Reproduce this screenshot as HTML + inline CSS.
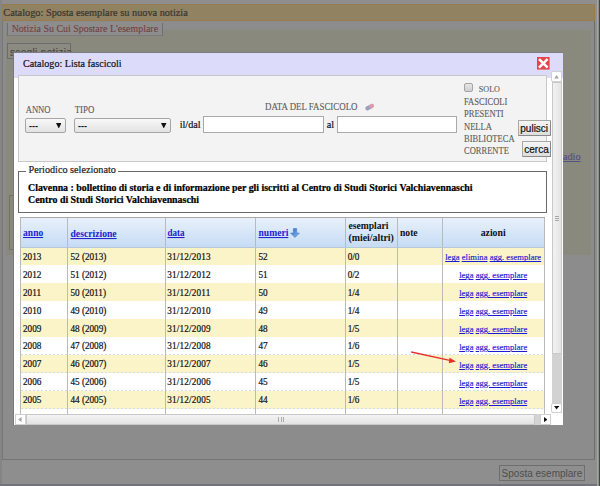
<!DOCTYPE html>
<html><head><meta charset="utf-8"><style>
html,body{margin:0;padding:0;width:600px;height:486px;overflow:hidden;background:#888}
#r>*{position:absolute;white-space:nowrap;box-sizing:border-box;-webkit-text-stroke:0.2px currentColor}
</style></head><body><div id="r" style="position:relative;width:600px;height:486px;overflow:hidden">
<div style="left:0px;top:0px;width:600px;height:486px;background:#8e8e8e"></div>
<div style="left:0px;top:0px;width:1.5px;height:486px;background:#858585"></div>
<div style="left:596.9px;top:0px;width:1.6px;height:486px;background:#a6a69e"></div>
<div style="left:598.5px;top:0px;width:1.5px;height:486px;background:#3e4a40"></div>
<div style="left:1.5px;top:4px;width:593.1px;height:17px;background:#918262;border:1px solid #9a7b4e;box-sizing:border-box"></div>
<div style="left:1.5px;top:21px;width:593px;height:1px;background:#767676"></div>
<div style="left:3.3px;top:8.15px;font-family:'Liberation Serif', serif;font-size:10.3px;line-height:10.3px;color:#3a3630;font-weight:normal;">Catalogo: Sposta esemplare su nuova notizia</div>
<div style="left:2px;top:21px;width:593px;height:438.5px;background:#8c8c8c;border-left:1px solid #777;border-right:1.2px solid #6e6e6e;border-bottom:1.5px solid #747474;box-sizing:border-box"></div>
<div style="left:5.5px;top:29.7px;width:585px;height:225px;background:#8a897d"></div>
<div style="left:7px;top:22.5px;width:156.3px;height:13.8px;background:#8d8d8d;border-left:1px solid #6f6f6f;border-right:1px solid #6f6f6f;border-bottom:1px solid #7a7a7a;box-sizing:border-box"></div>
<div style="left:11.7px;top:24.44px;font-family:'Liberation Serif', serif;font-size:9.95px;line-height:9.95px;color:#744040;font-weight:normal;-webkit-text-stroke:0.1px currentColor">Notizia Su Cui Spostare L&#39;esemplare</div>
<div style="left:7.2px;top:43.1px;width:63.8px;height:16px;background:#8c8b82;border:1px solid #6c6c6c;box-sizing:border-box"></div>
<div style="left:10px;top:47.50px;font-family:'Liberation Sans', sans-serif;font-size:10.0px;line-height:10.0px;color:#4a4842;font-weight:normal;letter-spacing:0.35px">scegli notizia</div>
<div style="left:8.6px;top:194.5px;width:10px;height:55px;border:1px solid #74736a"></div>
<div style="left:563px;top:151.83px;font-family:'Liberation Serif', serif;font-size:10.2px;line-height:10.2px;color:#52528a;font-weight:normal;text-decoration:underline">adio</div>
<div style="left:0px;top:484px;width:597px;height:2px;background:#72727c"></div>
<div style="left:499px;top:465px;width:86px;height:16.4px;background:#8f8f8f;border:1px solid #6e6e6e;box-sizing:border-box"></div>
<div style="left:501.6px;top:468.50px;font-family:'Liberation Sans', sans-serif;font-size:10.0px;line-height:10.0px;color:#4e4e4e;font-weight:normal;-webkit-text-stroke:0">Sposta esemplare</div>
<div style="left:14px;top:52.3px;width:549px;height:1px;background:#7c7c84"></div>
<div style="left:13.2px;top:52.5px;width:1px;height:372.5px;background:#787878"></div>
<div style="left:14px;top:53px;width:549px;height:372px;background:#ffffff"></div>
<div style="left:14px;top:53px;width:549px;height:25px;background:#dcdcfa"></div>
<div style="left:23px;top:58.62px;font-family:'Liberation Serif', serif;font-size:10.1px;line-height:10.1px;color:#111;font-weight:normal;transform:scaleY(1.05);transform-origin:0 8.38px;">Catalogo: Lista fascicoli</div>
<svg style="left:537px;top:57px;width:12.6px;height:12.6px" viewBox="0 0 13 13"><rect width="13" height="13" fill="#e8424a"/><path d="M3 3L10 10M10 3L3 10" stroke="#fff" stroke-width="2.6" stroke-linecap="square"/></svg>
<div style="left:18px;top:75px;width:529px;height:87px;background:#f3f3f3;border:1px solid #c8c8c8;box-sizing:border-box"></div>
<div style="left:25.7px;top:105.86px;font-family:'Liberation Serif', serif;font-size:8.6px;line-height:8.6px;color:#5c5c5c;font-weight:normal;transform:scaleY(1.12);transform-origin:0 7.14px;-webkit-text-stroke:0.1px currentColor">ANNO</div>
<div style="left:74.7px;top:105.70px;font-family:'Liberation Serif', serif;font-size:8.8px;line-height:8.8px;color:#5c5c5c;font-weight:normal;transform:scaleY(1.12);transform-origin:0 7.30px;-webkit-text-stroke:0.1px currentColor">TIPO</div>
<div style="left:25px;top:117.7px;width:40.7px;height:15px;background:linear-gradient(#f8f8f8,#e2e2e2);border:1px solid #a6a6a6;border-radius:2px;box-sizing:border-box"></div>
<div style="left:29px;top:121.85px;font-family:'Liberation Sans', sans-serif;font-size:9px;line-height:9px;color:#111;font-weight:bold;-webkit-text-stroke:0;">---</div>
<svg style="left:55.7px;top:122.5px;width:5.5px;height:5.5px" viewBox="0 0 7 7"><path d="M0 0H7L3.5 7Z" fill="#111"/></svg>
<div style="left:74px;top:117.7px;width:97.3px;height:15px;background:linear-gradient(#f8f8f8,#e2e2e2);border:1px solid #a6a6a6;border-radius:2px;box-sizing:border-box"></div>
<div style="left:78px;top:121.85px;font-family:'Liberation Sans', sans-serif;font-size:9px;line-height:9px;color:#111;font-weight:bold;-webkit-text-stroke:0;">---</div>
<svg style="left:161.3px;top:122.5px;width:5.5px;height:5.5px" viewBox="0 0 7 7"><path d="M0 0H7L3.5 7Z" fill="#111"/></svg>
<div style="left:179.7px;top:119.83px;font-family:'Liberation Serif', serif;font-size:10.2px;line-height:10.2px;color:#111;font-weight:normal;">il/dal</div>
<div style="left:202.7px;top:116px;width:121.3px;height:17.3px;background:#fff;border:1px solid #a9a9a9;box-sizing:border-box"></div>
<div style="left:326.7px;top:119.83px;font-family:'Liberation Serif', serif;font-size:10.2px;line-height:10.2px;color:#111;font-weight:normal;">al</div>
<div style="left:337px;top:116px;width:120.2px;height:17.4px;background:#fff;border:1px solid #a9a9a9;box-sizing:border-box"></div>
<div style="left:265px;top:102.61px;font-family:'Liberation Serif', serif;font-size:8.9px;line-height:8.9px;color:#5c5c5c;font-weight:normal;transform:scaleY(1.12);transform-origin:0 7.39px;-webkit-text-stroke:0.1px currentColor">DATA DEL FASCICOLO</div>
<svg style="left:363px;top:101px;width:12px;height:12px" viewBox="0 0 12 12"><g transform="translate(0.5 0.2) rotate(-28 6 6)"><rect x="1.5" y="4" width="9.2" height="4" rx="2" fill="#98a0c0"/><path d="M6 4H8.7A2 2 0 0 1 8.7 8H6Z" fill="#e29aa6"/></g></svg>
<div style="left:464px;top:83px;width:9.2px;height:9.2px;background:linear-gradient(#e6e6e6,#cfcfcf);border:1px solid #a4a4a4;border-radius:2px;box-sizing:border-box"></div>
<div style="left:478.8px;top:86.28px;font-family:'Liberation Serif', serif;font-size:8.1px;line-height:8.1px;color:#5c5c5c;font-weight:normal;transform:scaleY(1.12);transform-origin:0 6.72px;-webkit-text-stroke:0.1px currentColor">SOLO</div>
<div style="left:464px;top:97.94px;font-family:'Liberation Serif', serif;font-size:8.5px;line-height:8.5px;color:#5c5c5c;font-weight:normal;transform:scaleY(1.12);transform-origin:0 7.05px;-webkit-text-stroke:0.1px currentColor">FASCICOLI</div>
<div style="left:464px;top:110.25px;font-family:'Liberation Serif', serif;font-size:8.5px;line-height:8.5px;color:#5c5c5c;font-weight:normal;transform:scaleY(1.12);transform-origin:0 7.05px;-webkit-text-stroke:0.1px currentColor">PRESENTI</div>
<div style="left:464px;top:122.54px;font-family:'Liberation Serif', serif;font-size:8.5px;line-height:8.5px;color:#5c5c5c;font-weight:normal;transform:scaleY(1.12);transform-origin:0 7.05px;-webkit-text-stroke:0.1px currentColor">NELLA</div>
<div style="left:464px;top:134.84px;font-family:'Liberation Serif', serif;font-size:8.5px;line-height:8.5px;color:#5c5c5c;font-weight:normal;transform:scaleY(1.12);transform-origin:0 7.05px;-webkit-text-stroke:0.1px currentColor">BIBLIOTECA</div>
<div style="left:464px;top:147.14px;font-family:'Liberation Serif', serif;font-size:8.5px;line-height:8.5px;color:#5c5c5c;font-weight:normal;transform:scaleY(1.12);transform-origin:0 7.05px;-webkit-text-stroke:0.1px currentColor">CORRENTE</div>
<div style="left:518px;top:120.2px;width:32.8px;height:16px;background:linear-gradient(#f6f6f6,#dddddd);border:1px solid #a8a8a8;border-right-color:#8a8a8a;border-bottom-color:#8a8a8a;border-radius:1px;box-sizing:border-box"></div>
<div style="left:520.3px;top:123.70px;font-family:'Liberation Sans', sans-serif;font-size:10.0px;line-height:10.0px;color:#111;font-weight:normal;">pulisci</div>
<div style="left:522px;top:141px;width:28.8px;height:16px;background:linear-gradient(#f6f6f6,#dddddd);border:1px solid #a8a8a8;border-right-color:#8a8a8a;border-bottom-color:#8a8a8a;border-radius:1px;box-sizing:border-box"></div>
<div style="left:524.3px;top:144.70px;font-family:'Liberation Sans', sans-serif;font-size:10.0px;line-height:10.0px;color:#111;font-weight:normal;">cerca</div>
<div style="left:18px;top:170.6px;width:528.5px;height:42px;border:1px solid #6a6a6a;box-sizing:border-box"></div>
<div style="left:26px;top:168px;width:92px;height:5px;background:#fff"></div>
<div style="left:28.5px;top:165.33px;font-family:'Liberation Serif', serif;font-size:10.2px;line-height:10.2px;color:#222;font-weight:normal;">Periodico selezionato</div>
<div style="left:28px;top:182.50px;font-family:'Liberation Serif', serif;font-size:9.88px;line-height:9.88px;color:#000;font-weight:bold;transform:scaleY(1.12);transform-origin:0 8.20px;-webkit-text-stroke:0;-webkit-text-stroke:0.22px currentColor">Clavenna : bollettino di storia e di informazione per gli iscritti al Centro di Studi Storici Valchiavennaschi</div>
<div style="left:28px;top:195.00px;font-family:'Liberation Serif', serif;font-size:9.88px;line-height:9.88px;color:#000;font-weight:bold;transform:scaleY(1.12);transform-origin:0 8.20px;-webkit-text-stroke:0;-webkit-text-stroke:0.22px currentColor">Centro di Studi Storici Valchiavennaschi</div>
<div style="left:20.5px;top:217.3px;width:523.9px;height:30.19999999999999px;background:linear-gradient(#e9f1fb,#c6dcf5)"></div>
<div style="left:20.5px;top:247.5px;width:523.9px;height:17.91px;background:#fcf4c9"></div>
<div style="left:20.5px;top:264.91px;width:523.9px;height:1px;background:repeating-linear-gradient(90deg,#d2dde8 0 2px,transparent 2px 4px)"></div>
<div style="left:20.5px;top:265.41px;width:523.9px;height:17.91px;background:#ffffff"></div>
<div style="left:20.5px;top:282.82000000000005px;width:523.9px;height:1px;background:repeating-linear-gradient(90deg,#d2dde8 0 2px,transparent 2px 4px)"></div>
<div style="left:20.5px;top:283.32px;width:523.9px;height:17.91px;background:#fcf4c9"></div>
<div style="left:20.5px;top:300.73px;width:523.9px;height:1px;background:repeating-linear-gradient(90deg,#d2dde8 0 2px,transparent 2px 4px)"></div>
<div style="left:20.5px;top:301.23px;width:523.9px;height:17.91px;background:#ffffff"></div>
<div style="left:20.5px;top:318.64000000000004px;width:523.9px;height:1px;background:repeating-linear-gradient(90deg,#d2dde8 0 2px,transparent 2px 4px)"></div>
<div style="left:20.5px;top:319.14px;width:523.9px;height:17.91px;background:#fcf4c9"></div>
<div style="left:20.5px;top:336.55px;width:523.9px;height:1px;background:repeating-linear-gradient(90deg,#d2dde8 0 2px,transparent 2px 4px)"></div>
<div style="left:20.5px;top:337.05px;width:523.9px;height:17.91px;background:#ffffff"></div>
<div style="left:20.5px;top:354.46000000000004px;width:523.9px;height:1px;background:repeating-linear-gradient(90deg,#d2dde8 0 2px,transparent 2px 4px)"></div>
<div style="left:20.5px;top:354.96000000000004px;width:523.9px;height:17.91px;background:#fcf4c9"></div>
<div style="left:20.5px;top:372.37000000000006px;width:523.9px;height:1px;background:repeating-linear-gradient(90deg,#d2dde8 0 2px,transparent 2px 4px)"></div>
<div style="left:20.5px;top:372.87px;width:523.9px;height:17.91px;background:#ffffff"></div>
<div style="left:20.5px;top:390.28000000000003px;width:523.9px;height:1px;background:repeating-linear-gradient(90deg,#d2dde8 0 2px,transparent 2px 4px)"></div>
<div style="left:20.5px;top:390.78px;width:523.9px;height:17.91px;background:#fcf4c9"></div>
<div style="left:20.5px;top:408.19px;width:523.9px;height:1px;background:repeating-linear-gradient(90deg,#d2dde8 0 2px,transparent 2px 4px)"></div>
<div style="left:20.5px;top:408.69px;width:523.9px;height:5.310000000000002px;background:#ffffff"></div>
<div style="left:23px;top:252.86px;font-family:'Liberation Serif', serif;font-size:9.2px;line-height:9.2px;color:#111;font-weight:normal;transform:scaleY(1.12);transform-origin:0 7.64px;">2013</div>
<div style="left:70.4px;top:252.86px;font-family:'Liberation Serif', serif;font-size:9.2px;line-height:9.2px;color:#111;font-weight:normal;transform:scaleY(1.12);transform-origin:0 7.64px;">52 (2013)</div>
<div style="left:167.3px;top:252.86px;font-family:'Liberation Serif', serif;font-size:9.2px;line-height:9.2px;color:#111;font-weight:normal;transform:scaleY(1.12);transform-origin:0 7.64px;letter-spacing:0.17px">31/12/2013</div>
<div style="left:258.5px;top:252.86px;font-family:'Liberation Serif', serif;font-size:9.2px;line-height:9.2px;color:#111;font-weight:normal;transform:scaleY(1.12);transform-origin:0 7.64px;">52</div>
<div style="left:347.7px;top:252.86px;font-family:'Liberation Serif', serif;font-size:9.2px;line-height:9.2px;color:#111;font-weight:normal;transform:scaleY(1.12);transform-origin:0 7.64px;">0/0</div>
<div style="left:193.2px;width:600px;text-align:center;top:253.36px;font-family:'Liberation Serif', serif;font-size:8.6px;line-height:8.6px;color:#1c1cd0;font-weight:normal;-webkit-text-stroke:0.15px currentColor"><span style="text-decoration:underline">lega</span> <span style="text-decoration:underline">elimina</span> <span style="text-decoration:underline">agg. esemplare</span></div>
<div style="left:23px;top:270.77px;font-family:'Liberation Serif', serif;font-size:9.2px;line-height:9.2px;color:#111;font-weight:normal;transform:scaleY(1.12);transform-origin:0 7.64px;">2012</div>
<div style="left:70.4px;top:270.77px;font-family:'Liberation Serif', serif;font-size:9.2px;line-height:9.2px;color:#111;font-weight:normal;transform:scaleY(1.12);transform-origin:0 7.64px;">51 (2012)</div>
<div style="left:167.3px;top:270.77px;font-family:'Liberation Serif', serif;font-size:9.2px;line-height:9.2px;color:#111;font-weight:normal;transform:scaleY(1.12);transform-origin:0 7.64px;letter-spacing:0.17px">31/12/2012</div>
<div style="left:258.5px;top:270.77px;font-family:'Liberation Serif', serif;font-size:9.2px;line-height:9.2px;color:#111;font-weight:normal;transform:scaleY(1.12);transform-origin:0 7.64px;">51</div>
<div style="left:347.7px;top:270.77px;font-family:'Liberation Serif', serif;font-size:9.2px;line-height:9.2px;color:#111;font-weight:normal;transform:scaleY(1.12);transform-origin:0 7.64px;">0/2</div>
<div style="left:193.2px;width:600px;text-align:center;top:271.27px;font-family:'Liberation Serif', serif;font-size:8.6px;line-height:8.6px;color:#1c1cd0;font-weight:normal;-webkit-text-stroke:0.15px currentColor"><span style="text-decoration:underline">lega</span> <span style="text-decoration:underline">agg. esemplare</span></div>
<div style="left:23px;top:288.68px;font-family:'Liberation Serif', serif;font-size:9.2px;line-height:9.2px;color:#111;font-weight:normal;transform:scaleY(1.12);transform-origin:0 7.64px;">2011</div>
<div style="left:70.4px;top:288.68px;font-family:'Liberation Serif', serif;font-size:9.2px;line-height:9.2px;color:#111;font-weight:normal;transform:scaleY(1.12);transform-origin:0 7.64px;">50 (2011)</div>
<div style="left:167.3px;top:288.68px;font-family:'Liberation Serif', serif;font-size:9.2px;line-height:9.2px;color:#111;font-weight:normal;transform:scaleY(1.12);transform-origin:0 7.64px;letter-spacing:0.17px">31/12/2011</div>
<div style="left:258.5px;top:288.68px;font-family:'Liberation Serif', serif;font-size:9.2px;line-height:9.2px;color:#111;font-weight:normal;transform:scaleY(1.12);transform-origin:0 7.64px;">50</div>
<div style="left:347.7px;top:288.68px;font-family:'Liberation Serif', serif;font-size:9.2px;line-height:9.2px;color:#111;font-weight:normal;transform:scaleY(1.12);transform-origin:0 7.64px;">1/4</div>
<div style="left:193.2px;width:600px;text-align:center;top:289.18px;font-family:'Liberation Serif', serif;font-size:8.6px;line-height:8.6px;color:#1c1cd0;font-weight:normal;-webkit-text-stroke:0.15px currentColor"><span style="text-decoration:underline">lega</span> <span style="text-decoration:underline">agg. esemplare</span></div>
<div style="left:23px;top:306.59px;font-family:'Liberation Serif', serif;font-size:9.2px;line-height:9.2px;color:#111;font-weight:normal;transform:scaleY(1.12);transform-origin:0 7.64px;">2010</div>
<div style="left:70.4px;top:306.59px;font-family:'Liberation Serif', serif;font-size:9.2px;line-height:9.2px;color:#111;font-weight:normal;transform:scaleY(1.12);transform-origin:0 7.64px;">49 (2010)</div>
<div style="left:167.3px;top:306.59px;font-family:'Liberation Serif', serif;font-size:9.2px;line-height:9.2px;color:#111;font-weight:normal;transform:scaleY(1.12);transform-origin:0 7.64px;letter-spacing:0.17px">31/12/2010</div>
<div style="left:258.5px;top:306.59px;font-family:'Liberation Serif', serif;font-size:9.2px;line-height:9.2px;color:#111;font-weight:normal;transform:scaleY(1.12);transform-origin:0 7.64px;">49</div>
<div style="left:347.7px;top:306.59px;font-family:'Liberation Serif', serif;font-size:9.2px;line-height:9.2px;color:#111;font-weight:normal;transform:scaleY(1.12);transform-origin:0 7.64px;">1/4</div>
<div style="left:193.2px;width:600px;text-align:center;top:307.09px;font-family:'Liberation Serif', serif;font-size:8.6px;line-height:8.6px;color:#1c1cd0;font-weight:normal;-webkit-text-stroke:0.15px currentColor"><span style="text-decoration:underline">lega</span> <span style="text-decoration:underline">agg. esemplare</span></div>
<div style="left:23px;top:324.50px;font-family:'Liberation Serif', serif;font-size:9.2px;line-height:9.2px;color:#111;font-weight:normal;transform:scaleY(1.12);transform-origin:0 7.64px;">2009</div>
<div style="left:70.4px;top:324.50px;font-family:'Liberation Serif', serif;font-size:9.2px;line-height:9.2px;color:#111;font-weight:normal;transform:scaleY(1.12);transform-origin:0 7.64px;">48 (2009)</div>
<div style="left:167.3px;top:324.50px;font-family:'Liberation Serif', serif;font-size:9.2px;line-height:9.2px;color:#111;font-weight:normal;transform:scaleY(1.12);transform-origin:0 7.64px;letter-spacing:0.17px">31/12/2009</div>
<div style="left:258.5px;top:324.50px;font-family:'Liberation Serif', serif;font-size:9.2px;line-height:9.2px;color:#111;font-weight:normal;transform:scaleY(1.12);transform-origin:0 7.64px;">48</div>
<div style="left:347.7px;top:324.50px;font-family:'Liberation Serif', serif;font-size:9.2px;line-height:9.2px;color:#111;font-weight:normal;transform:scaleY(1.12);transform-origin:0 7.64px;">1/5</div>
<div style="left:193.2px;width:600px;text-align:center;top:325.00px;font-family:'Liberation Serif', serif;font-size:8.6px;line-height:8.6px;color:#1c1cd0;font-weight:normal;-webkit-text-stroke:0.15px currentColor"><span style="text-decoration:underline">lega</span> <span style="text-decoration:underline">agg. esemplare</span></div>
<div style="left:23px;top:342.41px;font-family:'Liberation Serif', serif;font-size:9.2px;line-height:9.2px;color:#111;font-weight:normal;transform:scaleY(1.12);transform-origin:0 7.64px;">2008</div>
<div style="left:70.4px;top:342.41px;font-family:'Liberation Serif', serif;font-size:9.2px;line-height:9.2px;color:#111;font-weight:normal;transform:scaleY(1.12);transform-origin:0 7.64px;">47 (2008)</div>
<div style="left:167.3px;top:342.41px;font-family:'Liberation Serif', serif;font-size:9.2px;line-height:9.2px;color:#111;font-weight:normal;transform:scaleY(1.12);transform-origin:0 7.64px;letter-spacing:0.17px">31/12/2008</div>
<div style="left:258.5px;top:342.41px;font-family:'Liberation Serif', serif;font-size:9.2px;line-height:9.2px;color:#111;font-weight:normal;transform:scaleY(1.12);transform-origin:0 7.64px;">47</div>
<div style="left:347.7px;top:342.41px;font-family:'Liberation Serif', serif;font-size:9.2px;line-height:9.2px;color:#111;font-weight:normal;transform:scaleY(1.12);transform-origin:0 7.64px;">1/6</div>
<div style="left:193.2px;width:600px;text-align:center;top:342.91px;font-family:'Liberation Serif', serif;font-size:8.6px;line-height:8.6px;color:#1c1cd0;font-weight:normal;-webkit-text-stroke:0.15px currentColor"><span style="text-decoration:underline">lega</span> <span style="text-decoration:underline">agg. esemplare</span></div>
<div style="left:23px;top:360.32px;font-family:'Liberation Serif', serif;font-size:9.2px;line-height:9.2px;color:#111;font-weight:normal;transform:scaleY(1.12);transform-origin:0 7.64px;">2007</div>
<div style="left:70.4px;top:360.32px;font-family:'Liberation Serif', serif;font-size:9.2px;line-height:9.2px;color:#111;font-weight:normal;transform:scaleY(1.12);transform-origin:0 7.64px;">46 (2007)</div>
<div style="left:167.3px;top:360.32px;font-family:'Liberation Serif', serif;font-size:9.2px;line-height:9.2px;color:#111;font-weight:normal;transform:scaleY(1.12);transform-origin:0 7.64px;letter-spacing:0.17px">31/12/2007</div>
<div style="left:258.5px;top:360.32px;font-family:'Liberation Serif', serif;font-size:9.2px;line-height:9.2px;color:#111;font-weight:normal;transform:scaleY(1.12);transform-origin:0 7.64px;">46</div>
<div style="left:347.7px;top:360.32px;font-family:'Liberation Serif', serif;font-size:9.2px;line-height:9.2px;color:#111;font-weight:normal;transform:scaleY(1.12);transform-origin:0 7.64px;">1/5</div>
<div style="left:193.2px;width:600px;text-align:center;top:360.82px;font-family:'Liberation Serif', serif;font-size:8.6px;line-height:8.6px;color:#1c1cd0;font-weight:normal;-webkit-text-stroke:0.15px currentColor"><span style="text-decoration:underline">lega</span> <span style="text-decoration:underline">agg. esemplare</span></div>
<div style="left:23px;top:378.23px;font-family:'Liberation Serif', serif;font-size:9.2px;line-height:9.2px;color:#111;font-weight:normal;transform:scaleY(1.12);transform-origin:0 7.64px;">2006</div>
<div style="left:70.4px;top:378.23px;font-family:'Liberation Serif', serif;font-size:9.2px;line-height:9.2px;color:#111;font-weight:normal;transform:scaleY(1.12);transform-origin:0 7.64px;">45 (2006)</div>
<div style="left:167.3px;top:378.23px;font-family:'Liberation Serif', serif;font-size:9.2px;line-height:9.2px;color:#111;font-weight:normal;transform:scaleY(1.12);transform-origin:0 7.64px;letter-spacing:0.17px">31/12/2006</div>
<div style="left:258.5px;top:378.23px;font-family:'Liberation Serif', serif;font-size:9.2px;line-height:9.2px;color:#111;font-weight:normal;transform:scaleY(1.12);transform-origin:0 7.64px;">45</div>
<div style="left:347.7px;top:378.23px;font-family:'Liberation Serif', serif;font-size:9.2px;line-height:9.2px;color:#111;font-weight:normal;transform:scaleY(1.12);transform-origin:0 7.64px;">1/5</div>
<div style="left:193.2px;width:600px;text-align:center;top:378.73px;font-family:'Liberation Serif', serif;font-size:8.6px;line-height:8.6px;color:#1c1cd0;font-weight:normal;-webkit-text-stroke:0.15px currentColor"><span style="text-decoration:underline">lega</span> <span style="text-decoration:underline">agg. esemplare</span></div>
<div style="left:23px;top:396.14px;font-family:'Liberation Serif', serif;font-size:9.2px;line-height:9.2px;color:#111;font-weight:normal;transform:scaleY(1.12);transform-origin:0 7.64px;">2005</div>
<div style="left:70.4px;top:396.14px;font-family:'Liberation Serif', serif;font-size:9.2px;line-height:9.2px;color:#111;font-weight:normal;transform:scaleY(1.12);transform-origin:0 7.64px;">44 (2005)</div>
<div style="left:167.3px;top:396.14px;font-family:'Liberation Serif', serif;font-size:9.2px;line-height:9.2px;color:#111;font-weight:normal;transform:scaleY(1.12);transform-origin:0 7.64px;letter-spacing:0.17px">31/12/2005</div>
<div style="left:258.5px;top:396.14px;font-family:'Liberation Serif', serif;font-size:9.2px;line-height:9.2px;color:#111;font-weight:normal;transform:scaleY(1.12);transform-origin:0 7.64px;">44</div>
<div style="left:347.7px;top:396.14px;font-family:'Liberation Serif', serif;font-size:9.2px;line-height:9.2px;color:#111;font-weight:normal;transform:scaleY(1.12);transform-origin:0 7.64px;">1/6</div>
<div style="left:193.2px;width:600px;text-align:center;top:396.64px;font-family:'Liberation Serif', serif;font-size:8.6px;line-height:8.6px;color:#1c1cd0;font-weight:normal;-webkit-text-stroke:0.15px currentColor"><span style="text-decoration:underline">lega</span> <span style="text-decoration:underline">agg. esemplare</span></div>
<div style="left:23.1px;top:228.72px;font-family:'Liberation Serif', serif;font-size:9.5px;line-height:9.5px;color:#1c1cd0;font-weight:bold;transform:scaleY(1.04);transform-origin:0 7.88px;-webkit-text-stroke:0;text-decoration:underline">anno</div>
<div style="left:70.5px;top:228.57px;font-family:'Liberation Serif', serif;font-size:9.67px;line-height:9.67px;color:#1c1cd0;font-weight:bold;transform:scaleY(1.04);transform-origin:0 8.03px;-webkit-text-stroke:0;text-decoration:underline">descrizione</div>
<div style="left:167.5px;top:228.93px;font-family:'Liberation Serif', serif;font-size:9.0px;line-height:9.0px;color:#1c1cd0;font-weight:bold;transform:scaleY(1.04);transform-origin:0 7.47px;-webkit-text-stroke:0;text-decoration:underline">data</div>
<div style="left:258.5px;top:228.45px;font-family:'Liberation Serif', serif;font-size:9.58px;line-height:9.58px;color:#1c1cd0;font-weight:bold;transform:scaleY(1.04);transform-origin:0 7.95px;-webkit-text-stroke:0;text-decoration:underline">numeri</div>
<svg style="left:289.5px;top:228px;width:10px;height:10px" viewBox="0 0 10 10"><defs><linearGradient id="ag" x1="0" y1="0" x2="1" y2="1"><stop offset="0" stop-color="#2f6cc8"/><stop offset="1" stop-color="#8ab8ee"/></linearGradient></defs><path d="M3.3 0.5H6.7V5H9.5L5 9.6L0.5 5H3.3Z" fill="url(#ag)" stroke="#3f78c8" stroke-width="0.5"/></svg>
<div style="left:348.4px;top:221.39px;font-family:'Liberation Serif', serif;font-size:9.65px;line-height:9.65px;color:#111;font-weight:bold;transform:scaleY(1.12);transform-origin:0 8.01px;-webkit-text-stroke:0;">esemplari</div>
<div style="left:348.4px;top:232.78px;font-family:'Liberation Serif', serif;font-size:9.9px;line-height:9.9px;color:#111;font-weight:bold;transform:scaleY(1.12);transform-origin:0 8.22px;-webkit-text-stroke:0;">(miei/altri)</div>
<div style="left:400px;top:228.23px;font-family:'Liberation Serif', serif;font-size:9.6px;line-height:9.6px;color:#111;font-weight:bold;transform:scaleY(1.04);transform-origin:0 7.97px;-webkit-text-stroke:0;">note</div>
<div style="left:193.2px;width:600px;text-align:center;top:228.07px;font-family:'Liberation Serif', serif;font-size:9.8px;line-height:9.8px;color:#111;font-weight:bold;transform:scaleY(1.04);transform-origin:0 8.13px;-webkit-text-stroke:0;">azioni</div>
<div style="left:20.0px;top:217.3px;width:1px;height:196.7px;background:#bababa"></div>
<div style="left:67.1px;top:217.3px;width:1px;height:196.7px;background:#bababa"></div>
<div style="left:164.6px;top:217.3px;width:1px;height:196.7px;background:#bababa"></div>
<div style="left:255.3px;top:217.3px;width:1px;height:196.7px;background:#bababa"></div>
<div style="left:345.0px;top:217.3px;width:1px;height:196.7px;background:#bababa"></div>
<div style="left:397.1px;top:217.3px;width:1px;height:196.7px;background:#bababa"></div>
<div style="left:441.8px;top:217.3px;width:1px;height:196.7px;background:#bababa"></div>
<div style="left:543.9px;top:217.3px;width:1px;height:196.7px;background:#bababa"></div>
<div style="left:20.0px;top:216.8px;width:524.9px;height:1px;background:#a8a8a8"></div>
<div style="left:20.5px;top:247.0px;width:523.9px;height:1px;background:#b8c8d8"></div>
<svg style="left:405px;top:348px;width:56px;height:18px" viewBox="0 0 56 18"><path d="M6.2 4L46 12.6" stroke="#e8302a" stroke-width="1.3"/><path d="M51 13.5L44.5 9.8L43.8 15.2Z" fill="#e8302a"/></svg>
<div style="left:14.5px;top:414px;width:535.5px;height:10.5px;background:#d4d4d4"></div>
<div style="left:25.5px;top:414px;width:509.5px;height:10.5px;background:linear-gradient(#f4f4f4,#e2e2e2);border:1px solid #c8c8c8;box-sizing:border-box"></div>
<div style="left:278.1px;top:417px;width:1px;height:4.5px;background:#ababab"></div>
<div style="left:280.5px;top:417px;width:1px;height:4.5px;background:#ababab"></div>
<div style="left:282.9px;top:417px;width:1px;height:4.5px;background:#ababab"></div>
<div style="left:14.5px;top:414px;width:11px;height:10.5px;background:#fff;border:1px solid #d0d0d0;box-sizing:border-box"></div>
<svg style="left:18.3px;top:416.8px;width:3.6px;height:5.2px" viewBox="0 0 5 7"><path d="M5 0V7L0 3.5Z" fill="#a8a8a8"/></svg>
<div style="left:540px;top:414px;width:10.5px;height:10.5px;background:#fff;border:1px solid #d0d0d0;box-sizing:border-box"></div>
<svg style="left:543.8px;top:417px;width:3.6px;height:5.2px" viewBox="0 0 5 7"><path d="M0 0V7L5 3.5Z" fill="#111"/></svg>
<div style="left:551.5px;top:71px;width:10.5px;height:342px;background:#d2d2d2"></div>
<div style="left:551.5px;top:82px;width:10.5px;height:272px;background:linear-gradient(90deg,#f2f2f2,#e4e4e4);border:1px solid #c8c8c8;box-sizing:border-box"></div>
<div style="left:555px;top:215.6px;width:4.2px;height:1px;background:#a8a8a8"></div>
<div style="left:555px;top:217.9px;width:4.2px;height:1px;background:#a8a8a8"></div>
<div style="left:555px;top:220.2px;width:4.2px;height:1px;background:#a8a8a8"></div>
<div style="left:551.3px;top:71px;width:10.5px;height:11.2px;background:#fff;border:1px solid #d0d0d0;border-radius:2px;box-sizing:border-box"></div>
<svg style="left:554.2px;top:75px;width:5.2px;height:3.6px" viewBox="0 0 7 5"><path d="M0 5H7L3.5 0Z" fill="#a8a8a8"/></svg>
<div style="left:551.3px;top:402.5px;width:10.5px;height:10.5px;background:#fff;border:1px solid #d0d0d0;border-radius:2px;box-sizing:border-box"></div>
<svg style="left:554.2px;top:406.3px;width:5.2px;height:3.6px" viewBox="0 0 7 5"><path d="M0 0H7L3.5 5Z" fill="#111"/></svg>
</div></body></html>
